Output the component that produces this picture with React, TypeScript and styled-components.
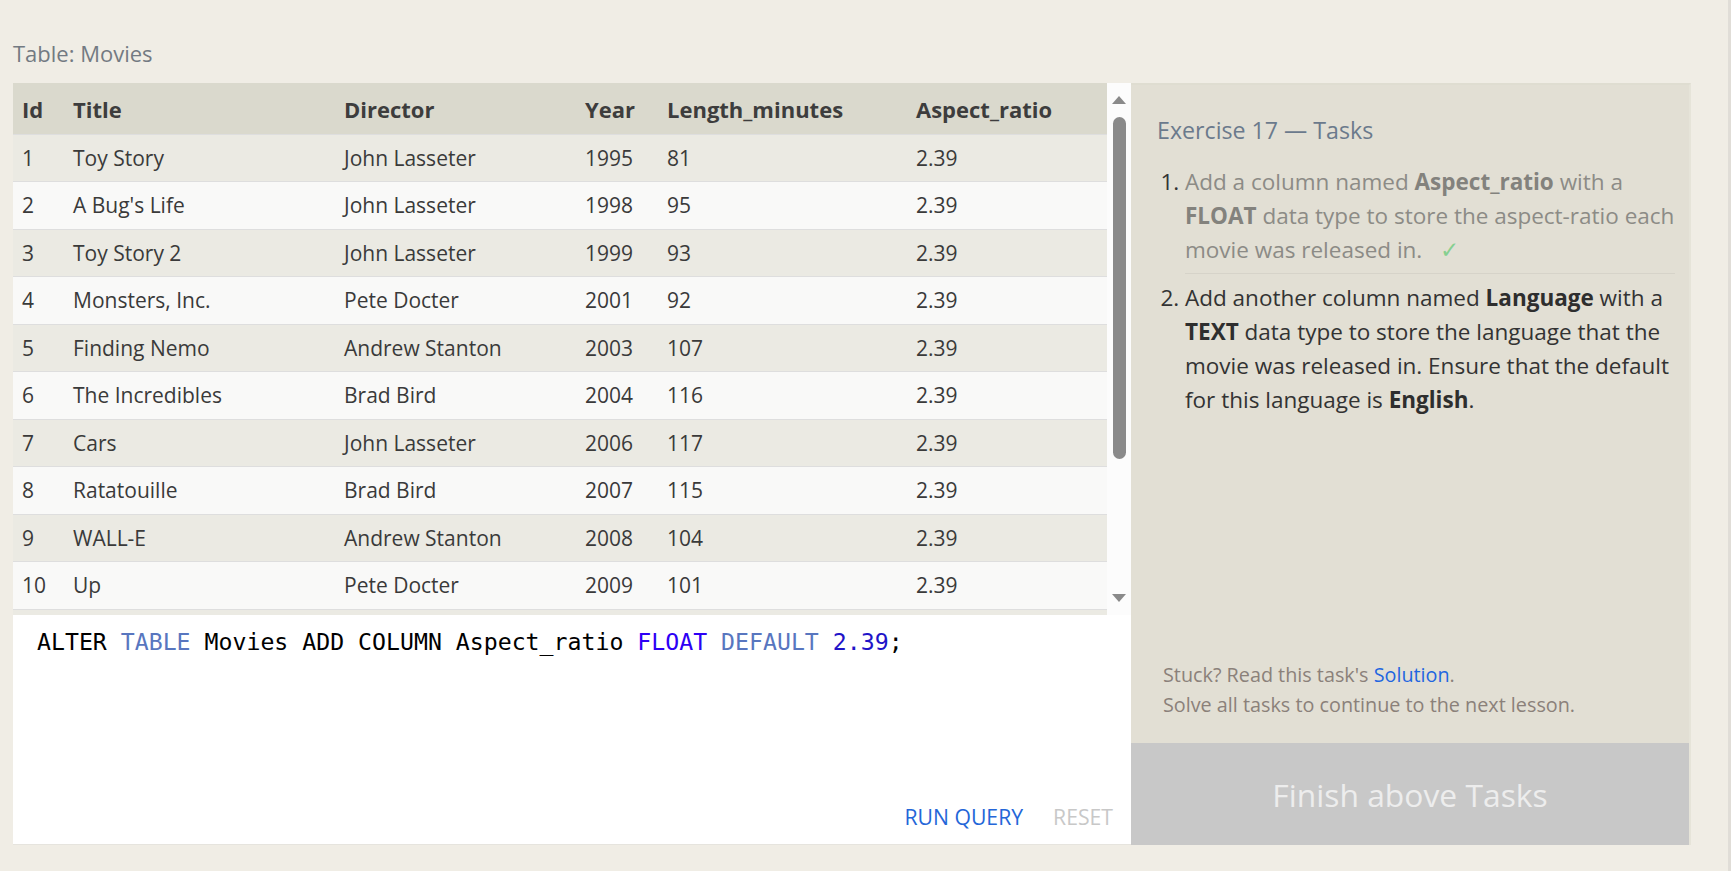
import React from "react";
import styled, { createGlobalStyle } from "styled-components";

const GlobalStyle = createGlobalStyle`
  html, body {
    margin: 0;
    padding: 0;
    background: #f0ede5;
    font-family: "Open Sans", "Noto Sans", sans-serif;
  }
  * { box-sizing: border-box; }
`;

const Page = styled.div`
  width: 1731px;
  min-height: 871px;
  padding: 38px 0 0 13px;
  border-right: 3px solid #e0ddd7;
`;

const Heading = styled.div`
  font-size: 22px;
  line-height: 30px;
  color: #737a82;
  margin-bottom: 15px;
`;

const Main = styled.div`
  display: flex;
  width: 1678px;
`;

const LeftColumn = styled.div`
  width: 1118px;
  display: flex;
  flex-direction: column;
`;

const TableArea = styled.div`
  display: flex;
  height: 532px;
`;

const TableClip = styled.div`
  flex: 1;
  overflow: hidden;
`;

const Table = styled.table`
  width: 100%;
  border-collapse: collapse;
  table-layout: fixed;
  font-size: 21px;
  color: #3a3a3a;
`;

const HeadCell = styled.th`
  height: 51px;
  padding: 2px 0 0 9px;
  text-align: left;
  font-size: 22px;
  font-weight: 700;
  color: #3d3d3d;
  background: #dad9cd;
  white-space: nowrap;
`;

const Row = styled.tr<{ $odd: boolean }>`
  background: ${(p) => (p.$odd ? "#ebeae3" : "#f9f9f8")};
  border-top: 1px solid #dedede;
`;

const Cell = styled.td`
  height: 47.5px;
  padding: 0 0 0 9px;
  white-space: nowrap;
`;

const Scrollbar = styled.div`
  width: 24px;
  background: #fcfcfc;
  display: flex;
  flex-direction: column;
  align-items: center;
`;

const ArrowBox = styled.div`
  height: 34px;
  width: 100%;
  display: flex;
  align-items: center;
  justify-content: center;
`;

const Arrow = styled.div<{ $down?: boolean }>`
  width: 0;
  height: 0;
  border-left: 7.5px solid transparent;
  border-right: 7.5px solid transparent;
  ${(p) =>
    p.$down
      ? "border-top: 8px solid #8a8a8a;"
      : "border-bottom: 8px solid #8a8a8a;"}
`;

const Thumb = styled.div`
  width: 13px;
  height: 342px;
  border-radius: 7px;
  background: #8a8a8a;
`;

const Spacer = styled.div`
  flex: 1;
`;

const Editor = styled.div`
  height: 230px;
  background: #ffffff;
  display: flex;
  flex-direction: column;
  padding: 12px 18px 13px 24px;
  border-bottom: 1px solid #e6e4de;
`;

const Code = styled.div`
  font-family: "DejaVu Sans Mono", "Liberation Mono", monospace;
  font-size: 23.2px;
  line-height: 30px;
  color: #000;
  white-space: pre;
  flex: 1;
`;

const Tok = styled.span<{ $kind: "kw" | "type" | "num" }>`
  color: ${(p) =>
    p.$kind === "kw" ? "#5876bf" : p.$kind === "type" ? "#2d00f5" : "#1f14c8"};
`;

const EditorFooter = styled.div`
  display: flex;
  justify-content: flex-end;
  gap: 30px;
`;

const TextButton = styled.span<{ $disabled?: boolean }>`
  font-size: 21.2px;
  line-height: 28px;
  color: ${(p) => (p.$disabled ? "#c8c8c8" : "#2466d8")};
`;

const RightPanel = styled.div`
  width: 560px;
  background: #e2dfd4;
  display: flex;
  flex-direction: column;
  border-top: 2px solid #dfddd1;
  border-right: 2px solid #e6e4d9;
`;

const Tasks = styled.div`
  flex: 1;
  padding: 29px 0 0 26px;
`;

const TasksTitle = styled.div`
  font-size: 23.2px;
  line-height: 32px;
  color: #6b7a8c;
  margin-bottom: 19px;
`;

const TaskList = styled.ol`
  margin: 0;
  padding: 0 0 0 28px;
  font-size: 22.5px;
  line-height: 34px;
`;

const TaskItem = styled.li<{ $done?: boolean }>`
  color: ${(p) => (p.$done ? "#8c8b86" : "#333333")};
  padding: ${(p) => (p.$done ? "0 0 6px 0" : "7px 0 0 0")};
  border-bottom: ${(p) => (p.$done ? "1px solid #d6d3c9" : "none")};
  margin-right: 14px;
  white-space: nowrap;
  &::marker {
    color: #333333;
  }
`;

const Bold = styled.b<{ $done?: boolean }>`
  font-weight: 700;
  color: ${(p) => (p.$done ? "#83827d" : "#2e2e2e")};
`;

const Check = styled.span`
  color: #86cf90;
  margin-left: 18px;
`;

const Help = styled.div`
  padding: 0 0 23px 32px;
  font-size: 19.8px;
  line-height: 30px;
  color: #8b817a;
`;

const Link = styled.span`
  color: #1f66e0;
`;

const FinishButton = styled.div`
  height: 102px;
  background: #c8c8c8;
  color: #ededed;
  font-size: 31.8px;
  display: flex;
  align-items: center;
  justify-content: center;
`;

const movies: [number, string, string, number, number, number][] = [
  [1, "Toy Story", "John Lasseter", 1995, 81, 2.39],
  [2, "A Bug's Life", "John Lasseter", 1998, 95, 2.39],
  [3, "Toy Story 2", "John Lasseter", 1999, 93, 2.39],
  [4, "Monsters, Inc.", "Pete Docter", 2001, 92, 2.39],
  [5, "Finding Nemo", "Andrew Stanton", 2003, 107, 2.39],
  [6, "The Incredibles", "Brad Bird", 2004, 116, 2.39],
  [7, "Cars", "John Lasseter", 2006, 117, 2.39],
  [8, "Ratatouille", "Brad Bird", 2007, 115, 2.39],
  [9, "WALL-E", "Andrew Stanton", 2008, 104, 2.39],
  [10, "Up", "Pete Docter", 2009, 101, 2.39],
];

const colWidths = [51, 271, 241, 82, 249, 200];

export default function App() {
  return (
    <>
      <GlobalStyle />
      <Page>
        <Heading>Table: Movies</Heading>
        <Main>
          <LeftColumn>
            <TableArea>
              <TableClip>
                <Table>
                  <colgroup>
                    {colWidths.map((w, i) => (
                      <col key={i} style={{ width: w }} />
                    ))}
                  </colgroup>
                  <thead>
                    <tr>
                      <HeadCell>Id</HeadCell>
                      <HeadCell>Title</HeadCell>
                      <HeadCell>Director</HeadCell>
                      <HeadCell>Year</HeadCell>
                      <HeadCell>Length_minutes</HeadCell>
                      <HeadCell>Aspect_ratio</HeadCell>
                    </tr>
                  </thead>
                  <tbody>
                    {movies.map((m, i) => (
                      <Row key={m[0]} $odd={i % 2 === 0}>
                        <Cell>{m[0]}</Cell>
                        <Cell>{m[1]}</Cell>
                        <Cell>{m[2]}</Cell>
                        <Cell>{m[3]}</Cell>
                        <Cell>{m[4]}</Cell>
                        <Cell>{m[5].toFixed(2)}</Cell>
                      </Row>
                    ))}
                    <Row $odd>
                      <Cell colSpan={6} />
                    </Row>
                  </tbody>
                </Table>
              </TableClip>
              <Scrollbar>
                <ArrowBox>
                  <Arrow />
                </ArrowBox>
                <Thumb />
                <Spacer />
                <ArrowBox>
                  <Arrow $down />
                </ArrowBox>
              </Scrollbar>
            </TableArea>
            <Editor>
              <Code>
                ALTER <Tok $kind="kw">TABLE</Tok> Movies ADD COLUMN Aspect_ratio{" "}
                <Tok $kind="type">FLOAT</Tok> <Tok $kind="kw">DEFAULT</Tok>{" "}
                <Tok $kind="num">2.39</Tok>;
              </Code>
              <EditorFooter>
                <TextButton>RUN QUERY</TextButton>
                <TextButton $disabled>RESET</TextButton>
              </EditorFooter>
            </Editor>
          </LeftColumn>
          <RightPanel>
            <Tasks>
              <TasksTitle>Exercise 17 — Tasks</TasksTitle>
              <TaskList>
                <TaskItem $done>
                  Add a column named <Bold $done>Aspect_ratio</Bold> with a
                  <br />
                  <Bold $done>FLOAT</Bold> data type to store the aspect-ratio each
                  <br />
                  movie was released in.<Check>✓</Check>
                </TaskItem>
                <TaskItem>
                  Add another column named <Bold>Language</Bold> with a
                  <br />
                  <Bold>TEXT</Bold> data type to store the language that the
                  <br />
                  movie was released in. Ensure that the default
                  <br />
                  for this language is <Bold>English</Bold>.
                </TaskItem>
              </TaskList>
            </Tasks>
            <Help>
              Stuck? Read this task's <Link>Solution</Link>.
              <br />
              Solve all tasks to continue to the next lesson.
            </Help>
            <FinishButton>Finish above Tasks</FinishButton>
          </RightPanel>
        </Main>
      </Page>
    </>
  );
}
